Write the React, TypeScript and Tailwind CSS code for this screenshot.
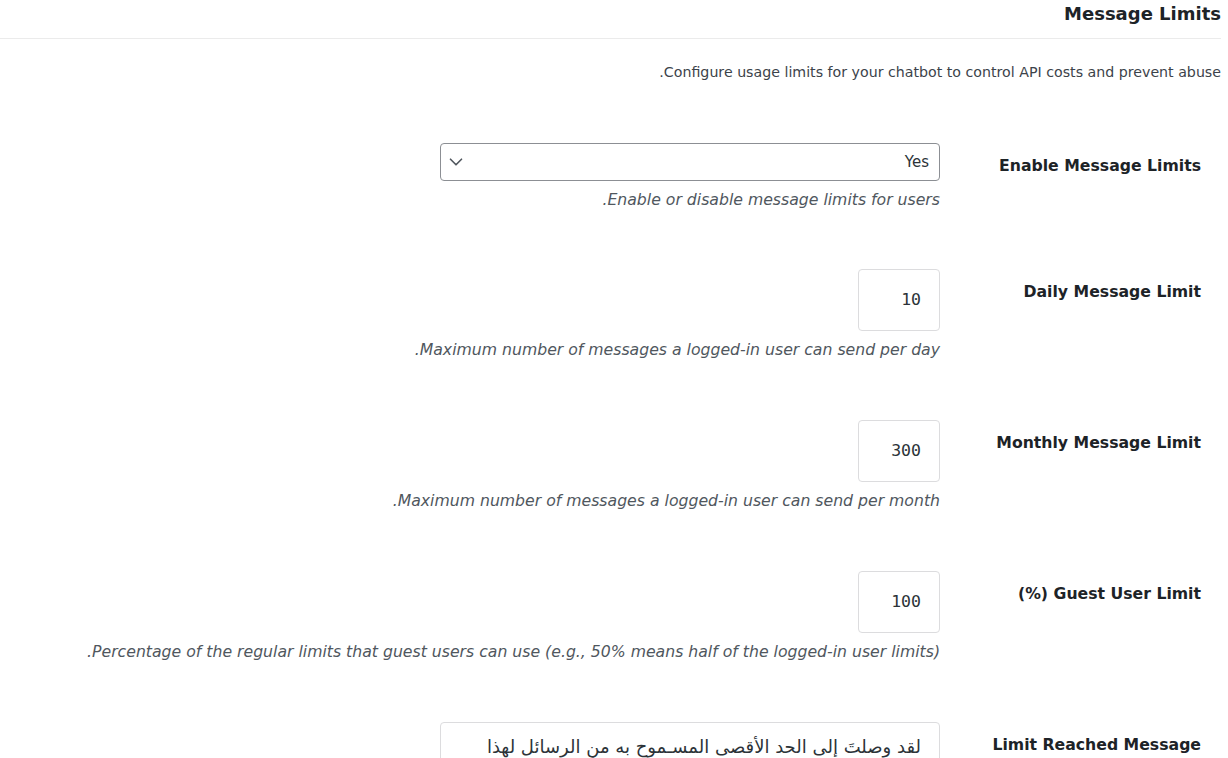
import { ChevronDown } from "lucide-react"

const rows = [
  { label: "Daily Message Limit", value: "10", desc: "Maximum number of messages a logged-in user can send per day." },
  { label: "Monthly Message Limit", value: "300", desc: "Maximum number of messages a logged-in user can send per month." },
  { label: "Guest User Limit (%)", value: "100", desc: "Percentage of the regular limits that guest users can use (e.g., 50% means half of the logged-in user limits)." },
]

function Label({ children }: { children: React.ReactNode }) {
  return (
    <div className="w-[281px] shrink-0 pr-[20px] pt-[13px] text-[15.7px] font-bold leading-[20px] text-[#1d2327]">
      {children}
    </div>
  )
}

function Desc({ children }: { children: React.ReactNode }) {
  return <p className="mt-[9px] text-[15.7px] italic leading-[20px] text-[#50575e]">{children}</p>
}

export default function App() {
  return (
    <div dir="rtl" className="min-h-screen bg-white pr-[7px] font-['DejaVu_Sans',sans-serif] text-[#3c434a]">

      <h2 className="pt-[3px] text-[18px] font-bold leading-[22px] text-[#1d2327]">Message Limits</h2>
      <div className="mt-[13px] border-b border-[#ebebeb]"></div>

      <p className="mt-[24px] text-[14.2px] leading-[19px]">
        Configure usage limits for your chatbot to control API costs and prevent abuse.
      </p>

      <div className="mt-[31px]">

        <div className="flex pt-[30px] pb-[29px]">
          <Label>Enable Message Limits</Label>
          <div>
            <div className="flex h-[38px] w-[500px] items-center justify-between rounded-[4px] border border-[#8c8f94] pl-[4px] pr-[10px] text-[15px] text-[#2c3338]">
              <span>Yes</span>
              <ChevronDown size={22} strokeWidth={1.8} className="text-[#50575e]" />
            </div>
            <Desc>Enable or disable message limits for users.</Desc>
          </div>
        </div>

        {rows.map(r => (
          <div key={r.label} className="flex pt-[30px] pb-[30px]">
            <Label>{r.label}</Label>
            <div>
              <div className="flex h-[62px] w-[82px] items-center rounded-[4px] border border-[#dcdcde] pr-[18px] font-['DejaVu_Sans_Mono',monospace] text-[16.5px] text-[#2c3338]">
                {r.value}
              </div>
              <Desc>{r.desc}</Desc>
            </div>
          </div>
        ))}

        <div className="flex pt-[30px] pb-[30px]">
          <Label>Limit Reached Message</Label>
          <div>
            <textarea
              readOnly
              dir="rtl"
              rows={4}
              className="w-[500px] resize-none rounded-[4px] border border-[#dcdcde] px-[18px] pt-[9px] font-['DejaVu_Sans',sans-serif] text-[18px] leading-[30px] text-[#2c3338] outline-none"
              value="لقد وصلتَ إلى الحد الأقصى المسـموح به من الرسائل لهذا اليوم. يرجى المحاولة مرة أخرى غداً."
            />
          </div>
        </div>

      </div>
    </div>
  )
}
